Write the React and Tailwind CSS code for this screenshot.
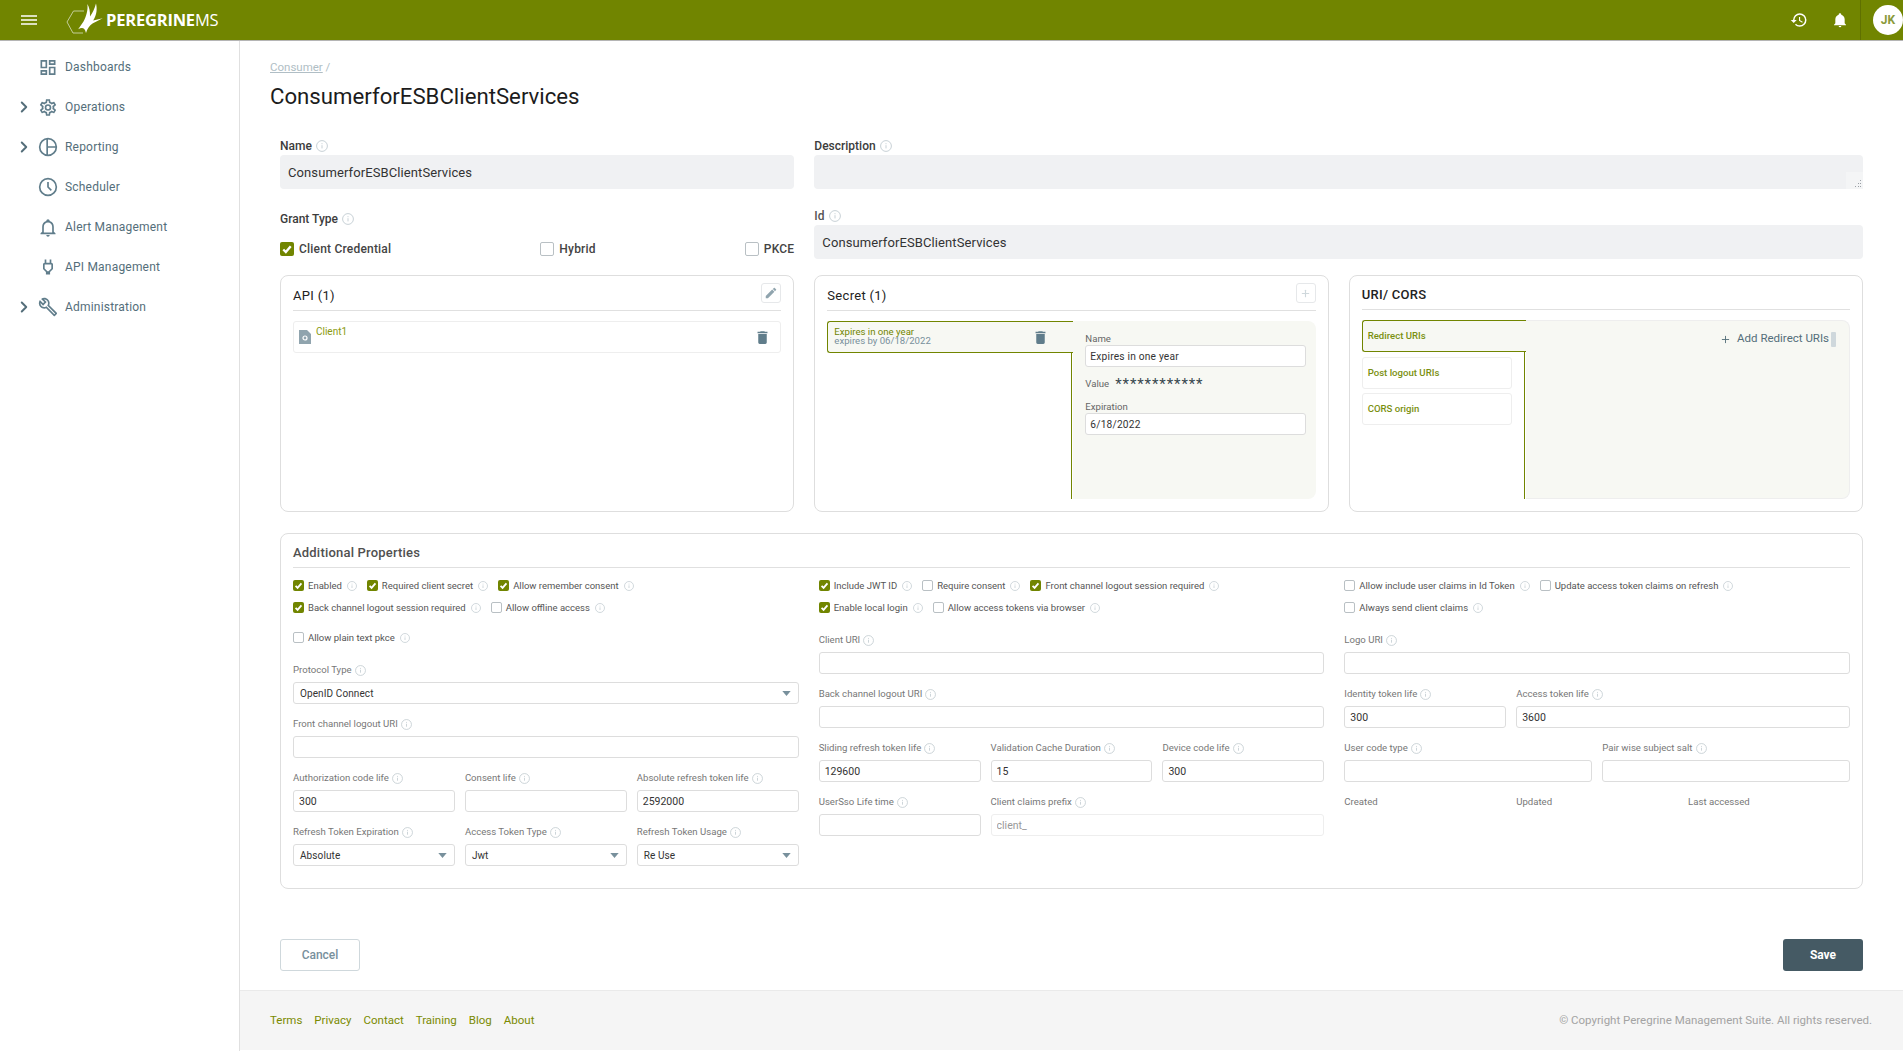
import { ChevronRight, Plus } from 'lucide-react';

const mdi = {
  dashboard: 'M19,5V7H15V5H19M9,5V11H5V5H9M19,13V19H15V13H19M9,17V19H5V17H9M21,3H13V9H21V3M11,3H3V13H11V3M21,11H13V21H21V11M11,15H3V21H11V15Z',
  cog: 'M12,8A4,4 0 0,1 16,12A4,4 0 0,1 12,16A4,4 0 0,1 8,12A4,4 0 0,1 12,8M12,10A2,2 0 0,0 10,12A2,2 0 0,0 12,14A2,2 0 0,0 14,12A2,2 0 0,0 12,10M10,22C9.75,22 9.54,21.82 9.5,21.58L9.13,18.93C8.5,18.68 7.96,18.34 7.44,17.94L4.95,18.95C4.73,19.03 4.46,18.95 4.34,18.73L2.34,15.27C2.21,15.05 2.27,14.78 2.46,14.63L4.57,12.97L4.5,12L4.57,11L2.46,9.37C2.27,9.22 2.21,8.95 2.34,8.73L4.34,5.27C4.46,5.05 4.73,4.96 4.95,5.05L7.44,6.05C7.96,5.66 8.5,5.32 9.13,5.07L9.5,2.42C9.54,2.18 9.75,2 10,2H14C14.25,2 14.46,2.18 14.5,2.42L14.87,5.07C15.5,5.32 16.04,5.66 16.56,6.05L19.05,5.05C19.27,4.96 19.54,5.05 19.66,5.27L21.66,8.73C21.79,8.95 21.73,9.22 21.54,9.37L19.43,11L19.5,12L19.43,13L21.54,14.63C21.73,14.78 21.79,15.05 21.66,15.27L19.66,18.73C19.54,18.95 19.27,19.04 19.05,18.95L16.56,17.95C16.04,18.34 15.5,18.68 14.87,18.93L14.5,21.58C14.46,21.82 14.25,22 14,22H10M11.25,4L10.88,6.61C9.68,6.86 8.62,7.5 7.85,8.39L5.44,7.35L4.69,8.65L6.8,10.2C6.4,11.37 6.4,12.64 6.8,13.8L4.68,15.36L5.43,16.66L7.86,15.62C8.63,16.5 9.68,17.14 10.87,17.38L11.24,20H12.76L13.13,17.39C14.32,17.14 15.37,16.5 16.14,15.62L18.57,16.66L19.32,15.36L17.2,13.81C17.6,12.64 17.6,11.37 17.2,10.2L19.31,8.65L18.56,7.35L16.15,8.39C15.38,7.5 14.32,6.86 13.12,6.62L12.75,4H11.25Z',
  bellOutline: 'M10 21H14C14 22.1 13.1 23 12 23S10 22.1 10 21M21 19V20H3V19L5 17V11C5 7.9 7 5.2 10 4.3V4C10 2.9 10.9 2 12 2S14 2.9 14 4V4.3C17 5.2 19 7.9 19 11V17L21 19M17 11C17 8.2 14.8 6 12 6S7 8.2 7 11V18H17V11Z',
  plug: 'M16 7V3H14V7H10V3H8V7C7 7 6 8 6 9V14.5L9.5 18V21H14.5V18L18 14.5V9C18 8 17 7 16 7M16 13.67L12.67 17H11.33L8 13.67V9H16V13.67Z',
  wrench: 'M22.61,19L13.53,9.91C14.46,7.57 14,4.81 12.09,2.91C9.79,0.61 6.21,0.4 3.66,2.26L7.5,6.11L6.08,7.5L2.25,3.69C0.39,6.23 0.6,9.82 2.9,12.11C4.76,13.97 7.47,14.46 9.79,13.59L18.9,22.7C19.29,23.09 19.92,23.09 20.31,22.7L22.61,20.4C23,20 23,19.39 22.61,19M19.61,20.59L10.15,11.13C9.54,11.58 8.86,11.85 8.15,11.95C6.79,12.15 5.36,11.74 4.32,10.7C3.37,9.76 2.93,8.5 3,7.26L6.09,10.35L10.33,6.11L7.24,3C8.5,2.95 9.73,3.39 10.68,4.33C11.76,5.41 12.17,6.9 11.92,8.29C11.8,9 11.5,9.66 11.04,10.25L20.5,19.7L19.61,20.59Z',
  history: 'M13.5,8H12V13L16.28,15.54L17,14.33L13.5,12.25V8M13,3A9,9 0 0,0 4,12H1L4.96,16.03L9,12H6A7,7 0 0,1 13,5A7,7 0 0,1 20,12A7,7 0 0,1 13,19C11.07,19 9.32,18.21 8.06,16.94L6.64,18.36C8.27,20 10.5,21 13,21A9,9 0 0,0 22,12A9,9 0 0,0 13,3',
  bell: 'M21,19V20H3V19L5,17V11C5,7.9 7.03,5.17 10,4.29C10,4.19 10,4.1 10,4A2,2 0 0,1 12,2A2,2 0 0,1 14,4C14,4.1 14,4.19 14,4.29C16.97,5.17 19,7.9 19,11V17L21,19M14,21A2,2 0 0,1 12,23A2,2 0 0,1 10,21',
  trash: 'M19,4H15.5L14.5,3H9.5L8.5,4H5V6H19M6,19A2,2 0 0,0 8,21H16A2,2 0 0,0 18,19V7H6V19Z',
  pencil: 'M20.71,7.04C21.1,6.65 21.1,6 20.71,5.63L18.37,3.29C18,2.9 17.35,2.9 16.96,3.29L15.12,5.12L18.87,8.87M3,17.25V21H6.75L17.81,9.93L14.06,6.18L3,17.25Z',
};

function Mdi({ d, className }) {
  return (
    <svg viewBox="0 0 24 24" className={className} fill="currentColor" fillRule="evenodd">
      <path d={d} />
    </svg>
  );
}

function PieIcon({ className }) {
  return (
    <svg viewBox="0 0 24 24" className={className} fill="none" stroke="currentColor" strokeWidth="2">
      <circle cx="12" cy="12" r="10" />
      <path d="M11 2v20M11 12h11" />
    </svg>
  );
}

function ClockIcon({ className }) {
  return (
    <svg viewBox="0 0 24 24" className={className} fill="none" stroke="currentColor" strokeWidth="2">
      <circle cx="12" cy="12" r="10" />
      <path d="M12 6v6l4 4" />
    </svg>
  );
}

function Info({ className = 'w-[11px] h-[11px]' }) {
  return (
    <svg viewBox="0 0 12 12" className={`shrink-0 text-[#c2ccd1] ${className}`} fill="none" stroke="currentColor" strokeWidth="0.9">
      <circle cx="6" cy="6" r="5.4" />
      <path d="M6 5.2v3.2M6 3.2v1" />
    </svg>
  );
}

function Logo() {
  return (
    <svg viewBox="60 0 48 40" className="w-[48px] h-10 ml-[-1px]">
      <path d="M84 11H73.5L67 22l6 11h10" fill="none" stroke="#c3cd99" strokeWidth="1" />
      <path
        d="M87.3 4C88.3 10 86 17 83.5 21.5L78.2 29.3C81.5 27.5 84.5 26.8 86 33C87.2 28.6 89.5 25.4 92.5 23.4L102.7 18.3L93.2 20.4C97 14.5 97.2 8.5 96 3.4C94.6 8.8 92.5 13 90 16.4C90.2 11.4 89.3 7.2 87.3 4Z"
        fill="#fff"
      />
    </svg>
  );
}

function Check({ on, size = 'sm' }) {
  const box = size === 'lg' ? 'w-[14px] h-[14px]' : 'w-[11px] h-[11px]';
  return (
    <span className={`${box} shrink-0 rounded-[2px] flex items-center justify-center ${on ? 'bg-[#718500]' : 'bg-white border border-[#b9c0c4]'}`}>
      {on && (
        <svg viewBox="0 0 12 12" className="w-full h-full" fill="none" stroke="#fff" strokeWidth="2">
          <path d="M2.8 6.4l2.2 2.2 4.2-5" />
        </svg>
      )}
    </span>
  );
}

function CheckRow({ items, className = '' }) {
  return (
    <div className={`flex items-center h-[23px] gap-[10px] ${className}`}>
      {items.map(([label, on]) => (
        <div key={label} className="flex items-center">
          <Check on={on} />
          <span className="ml-[4px] text-[9.5px] leading-3 text-[#555] whitespace-nowrap">{label}</span>
          <Info className="w-[10px] h-[10px] ml-[5px] mt-[1px]" />
        </div>
      ))}
    </div>
  );
}

function Label({ text, info = true }) {
  return (
    <div className="flex items-center h-3 mb-[6px] gap-[3px] text-[9.6px] text-[#777] whitespace-nowrap">
      {text}
      {info && <Info />}
    </div>
  );
}

function Field({ label, value = '', className = '', disabled = false }) {
  return (
    <div className={`mb-[14px] min-w-0 ${className}`}>
      <Label text={label} />
      <input
        readOnly
        value={value}
        className={`block w-full h-[22px] px-[5px] rounded-[3px] border bg-white text-[10.5px] outline-none ${disabled ? 'border-[#eeeeee] text-[#999]' : 'border-[#dddddd] text-[#333]'}`}
      />
    </div>
  );
}

function SelectField({ label, value, className = '' }) {
  return (
    <div className={`mb-[14px] min-w-0 ${className}`}>
      <Label text={label} />
      <div className="flex items-center justify-between h-[22px] pl-[6px] pr-[7px] rounded-[3px] border border-[#dddddd] bg-white text-[10px] tracking-[0.1px] text-[#333]">
        {value}
        <svg viewBox="0 0 10 6" className="w-[9px] h-[5px] text-[#78909c]" fill="currentColor">
          <path d="M0 0h10L5 6z" />
        </svg>
      </div>
    </div>
  );
}

function IconBtn({ children }) {
  return (
    <button className="w-5 h-5 flex items-center justify-center rounded-[3px] border border-[#e6e8ea] bg-white text-[#90a4ae]">
      {children}
    </button>
  );
}

function Card({ title, action, children, compact = false }) {
  return (
    <div className="h-[237px] px-3 border border-[#dedede] rounded-lg bg-white">
      <div className={`flex justify-between items-start pt-[7px] border-b border-[#e0e0e0] ${compact ? 'h-[34px]' : 'h-[35px]'}`}>
        <h3 className={`text-[13px] leading-5 tracking-[0.3px] text-[#222] ${compact ? 'mt-[2px] font-medium' : 'mt-[3px] font-normal'}`}>{title}</h3>
        {action}
      </div>
      {children}
    </div>
  );
}

function SmallInput({ label, value }) {
  return (
    <div>
      <div className="text-[9.6px] leading-3 text-[#666]">{label}</div>
      <input readOnly value={value} className="block w-full h-[22px] px-[4px] rounded-[3px] border border-[#dddddd] bg-white text-[10.2px] tracking-[0.2px] text-[#333] outline-none" />
    </div>
  );
}

const nav = [
  { label: 'Dashboards', icon: <Mdi d={mdi.dashboard} className="w-[21px] h-[21px]" /> },
  { label: 'Operations', icon: <Mdi d={mdi.cog} className="w-[21px] h-[21px]" />, more: true },
  { label: 'Reporting', icon: <PieIcon className="w-5 h-5" />, more: true },
  { label: 'Scheduler', icon: <ClockIcon className="w-5 h-5" /> },
  { label: 'Alert Management', icon: <Mdi d={mdi.bellOutline} className="w-[21px] h-[21px]" /> },
  { label: 'API Management', icon: <Mdi d={mdi.plug} className="w-6 h-6" /> },
  { label: 'Administration', icon: <Mdi d={mdi.wrench} className="w-[22px] h-[22px]" />, more: true },
];

const footerLinks = ['Terms', 'Privacy', 'Contact', 'Training', 'Blog', 'About'];

function Sidebar() {
  return (
    <aside className="w-[240px] shrink-0 border-r border-[#e0e0e0] bg-white pt-[6px]">
      {nav.map((item) => (
        <div key={item.label} className="relative flex items-center h-10 pl-[38px] text-[12px] tracking-[0.2px] text-[#546e7a]">
          {item.more && <ChevronRight className="absolute left-[15px] w-[18px] h-[18px] mt-[-1px]" strokeWidth={2.6} />}
          <span className="w-5 flex justify-center text-[#607d8b]">{item.icon}</span>
          <span className="ml-[7px]">{item.label}</span>
        </div>
      ))}
    </aside>
  );
}

export default function App() {
  return (
    <div className="h-screen flex flex-col overflow-hidden bg-white font-[Roboto,sans-serif]">
      <header className="flex items-center h-[41px] shrink-0 bg-[#718500] border-b border-[#b5b5b5] text-white">
        <svg viewBox="0 0 16 12" className="ml-[21px] w-4 h-3 mr-[24px]" stroke="#fff" strokeWidth="1.6">
          <path d="M0 2h16M0 6h16M0 10h16" />
        </svg>
        <Logo />
        <span className="ml-[-2px] font-['Open_Sans',sans-serif] text-[16.5px] leading-none tracking-[-0.2px] font-bold">
          PEREGRINE<span className="font-normal">MS</span>
        </span>
        <div className="ml-auto flex items-center h-full">
          <Mdi d={mdi.history} className="w-[18px] h-[18px] mr-[24px]" />
          <Mdi d={mdi.bell} className="w-[16px] h-[16px] mr-[12px]" />
          <div className="h-full border-l border-[#5f7000] pl-[12px] flex items-center">
            <div className="w-[30px] h-[30px] rounded-full bg-white flex items-center justify-center text-[12px] font-bold text-[#8a9a3a]">
              JK
            </div>
          </div>
        </div>
      </header>

      <div className="flex flex-1 min-h-0">
        <Sidebar />

        <main className="flex-1 flex flex-col min-w-0">
          <div className="flex-1 px-[30px] pt-[19px]">
            <div className="text-[11.5px] leading-[14px] text-[#b0bec5]">
              <span className="underline">Consumer</span> /
            </div>
            <h1 className="mt-[6px] text-[22.2px] leading-8 font-normal text-[#1c1c1c]">ConsumerforESBClientServices</h1>

            <div className="px-[10px]">
              <div className="grid grid-cols-3 gap-x-5 mt-[27px]">
                <div>
                  <div className="flex items-center h-[13px] gap-[4px] text-[12px] font-medium text-[#3c3c3c]">
                    Name <Info className="w-[12px] h-[12px]" />
                  </div>
                  <input readOnly value="ConsumerforESBClientServices" className="block w-full h-[34px] mt-[3px] px-[8px] rounded bg-[#f0f1f3] text-[13px] tracking-[0.1px] text-[#333] outline-none" />
                  <div className="flex items-center h-[13px] mt-[23px] gap-[4px] text-[12px] font-medium text-[#3c3c3c]">
                    Grant Type <Info className="w-[12px] h-[12px]" />
                  </div>
                  <div className="flex justify-between mt-[15px] text-[12px] font-medium tracking-[0.2px] text-[#444]">
                    {[['Client Credential', true], ['Hybrid', false], ['PKCE', false]].map(([label, on]) => (
                      <div key={label} className="flex items-center gap-[5px]">
                        <Check on={on} size="lg" />
                        {label}
                      </div>
                    ))}
                  </div>
                </div>
                <div className="col-span-2">
                  <div className="flex items-center h-[13px] gap-[4px] text-[12px] font-medium text-[#3c3c3c]">
                    Description <Info className="w-[12px] h-[12px]" />
                  </div>
                  <div className="relative mt-[3px]">
                    <textarea readOnly className="block w-full h-[34px] rounded bg-[#f0f1f3] outline-none resize-none" />
                    <span className="absolute right-0 bottom-0 w-[17px] h-[17px] bg-[#f4f5f6] flex items-end justify-end p-[1px]">
                      <svg viewBox="0 0 8 8" className="w-2 h-2 text-[#9aa0a6]" fill="currentColor">
                        <path d="M6 0h1v1H6zM4 3h1v1H4zM6 3h1v1H6zM1 6h1v1H1zM4 6h1v1H4zM6 6h1v1H6z" />
                      </svg>
                    </span>
                  </div>
                  <div className="flex items-center h-[13px] mt-5 gap-[4px] text-[12px] font-medium text-[#555]">
                    Id <Info className="w-[12px] h-[12px]" />
                  </div>
                  <input readOnly value="ConsumerforESBClientServices" className="block w-full h-[34px] mt-[3px] px-[8px] rounded bg-[#f0f1f3] text-[13px] tracking-[0.1px] text-[#333] outline-none" />
                </div>
              </div>

              <div className="grid grid-cols-3 gap-x-5 mt-4">
                <Card title="API (1)" action={<IconBtn><Mdi d={mdi.pencil} className="w-[14px] h-[14px]" /></IconBtn>}>
                  <div className="flex items-center h-8 mt-[10px] pl-[5px] pr-[9px] border border-[#eeeeee] rounded-[3px]">
                    <svg viewBox="0 0 12 14" className="w-3 h-[14px] shrink-0">
                      <path d="M0 0h8l4 4v10H0z" fill="#90a4ae" />
                      <circle cx="6" cy="8" r="2" fill="none" stroke="#fff" strokeWidth="1.2" />
                    </svg>
                    <span className="ml-[5px] mb-[10px] text-[10px] leading-3 text-[#8a9a10]">Client1</span>
                    <Mdi d={mdi.trash} className="ml-auto w-[17px] h-[17px] text-[#607d8b]" />
                  </div>
                </Card>

                <Card title="Secret (1)" action={<IconBtn><Plus className="w-[11px] h-[11px] text-[#cfd8dc]" strokeWidth={2.5} /></IconBtn>}>
                  <div className="flex h-[178px] mt-[10px]">
                    <div className="w-[246px] shrink-0 flex flex-col">
                      <div className="flex items-center h-8 pl-[6px] pr-[24px] bg-[#f7f8f3] border border-r-0 border-[#718500] rounded-l-[3px]">
                        <div className="text-[9.6px] leading-[9px] mb-[2px]">
                          <div className="text-[#718500]">Expires in one year</div>
                          <div className="text-[#78909c]">expires by 06/18/2022</div>
                        </div>
                        <Mdi d={mdi.trash} className="ml-auto w-[17px] h-[17px] text-[#607d8b]" />
                      </div>
                      <div className="flex-1 mr-[1px] border-r border-[#718500]" />
                    </div>
                    <div className="flex-1 bg-[#f7f8f3] rounded-r-lg pt-[12px] pl-[12px] pr-[10px]">
                      <SmallInput label="Name" value="Expires in one year" />
                      <div className="flex items-center h-4 mt-[9px] text-[9.6px] text-[#666]">
                        Value
                        <span className="ml-[6px] text-[15px] leading-4 tracking-[0.9px] text-[#37474f]">************</span>
                      </div>
                      <div className="mt-[9px]">
                        <SmallInput label="Expiration" value="6/18/2022" />
                      </div>
                    </div>
                  </div>
                </Card>

                <Card compact title="URI/ CORS">
                  <div className="flex h-[179px] mt-[10px]">
                    <div className="w-[164px] shrink-0 flex flex-col">
                      <div className="flex items-center h-8 pl-[5px] pt-[1px] bg-[#f7f8f3] border border-r-0 border-[#718500] rounded-l-[3px] text-[9.6px] font-medium text-[#7a9010]">
                        Redirect URIs
                      </div>
                      <div className="flex-1 mr-[1px] border-r border-[#718500] pt-[5px]">
                        <div className="flex items-center w-[150px] h-8 pl-[5px] mb-[4px] border border-[#eeeeee] rounded-[3px] text-[9.6px] font-medium text-[#7a9010]">
                          Post logout URIs
                        </div>
                        <div className="flex items-center w-[150px] h-8 pl-[5px] border border-[#eeeeee] rounded-[3px] text-[9.6px] font-medium text-[#7a9010]">
                          CORS origin
                        </div>
                      </div>
                    </div>
                    <div className="flex-1 flex justify-end items-start bg-[#f7f8f3] border border-l-0 border-[#eeeeee] rounded-r-lg pt-[10px] pr-[13px]">
                      <div className="flex items-center h-[16px] text-[11.5px] text-[#546e7a]">
                        <Plus className="w-[11px] h-[11px] mr-[6px]" strokeWidth={2} />
                        Add Redirect URIs
                        <span className="w-[5px] h-[15px] ml-[2px] rounded-[1px] bg-[#cfd8dc]" />
                      </div>
                    </div>
                  </div>
                </Card>
              </div>

              <div className="h-[356px] mt-[21px] px-3 border border-[#dedede] rounded-lg bg-white">
                <div className="flex items-center h-[34px] pt-[4px] border-b border-[#e0e0e0] text-[13px] font-medium tracking-[0.2px] text-[#505050]">
                  Additional Properties
                </div>
                <div className="grid grid-cols-3 gap-x-5 mt-[6px]">
                  <div>
                    <CheckRow className="mb-[-1px]" items={[['Enabled', true], ['Required client secret', true], ['Allow remember consent', true]]} />
                    <CheckRow items={[['Back channel logout session required', true], ['Allow offline access', false]]} />
                    <CheckRow className="mt-[7px] mb-[15px]" items={[['Allow plain text pkce', false]]} />
                    <SelectField label="Protocol Type" value="OpenID Connect" />
                    <Field label="Front channel logout URI" />
                    <div className="grid grid-cols-3 gap-x-[10px]">
                      <Field label="Authorization code life" value="300" />
                      <Field label="Consent life" />
                      <Field label="Absolute refresh token life" value="2592000" />
                      <SelectField label="Refresh Token Expiration" value="Absolute" />
                      <SelectField label="Access Token Type" value="Jwt" />
                      <SelectField label="Refresh Token Usage" value="Re Use" />
                    </div>
                  </div>

                  <div>
                    <CheckRow className="mb-[-1px]" items={[['Include JWT ID', true], ['Require consent', false], ['Front channel logout session required', true]]} />
                    <CheckRow className="mb-[15px]" items={[['Enable local login', true], ['Allow access tokens via browser', false]]} />
                    <Field label="Client URI" />
                    <Field label="Back channel logout URI" />
                    <div className="grid grid-cols-3 gap-x-[10px]">
                      <Field label="Sliding refresh token life" value="129600" />
                      <Field label="Validation Cache Duration" value="15" />
                      <Field label="Device code life" value="300" />
                      <Field label="UserSso Life time" />
                      <Field label="Client claims prefix" value="client_" disabled className="col-span-2" />
                    </div>
                  </div>

                  <div>
                    <CheckRow className="mb-[-1px]" items={[['Allow include user claims in Id Token', false], ['Update access token claims on refresh', false]]} />
                    <CheckRow className="mb-[15px]" items={[['Always send client claims', false]]} />
                    <Field label="Logo URI" />
                    <div className="grid grid-cols-3 gap-x-[10px]">
                      <Field label="Identity token life" value="300" />
                      <Field label="Access token life" value="3600" className="col-span-2" />
                    </div>
                    <div className="grid grid-cols-2 gap-x-[10px]">
                      <Field label="User code type" />
                      <Field label="Pair wise subject salt" />
                    </div>
                    <div className="grid grid-cols-3 gap-x-[10px]">
                      {['Created', 'Updated', 'Last accessed'].map((t) => (
                        <Label key={t} text={t} info={false} />
                      ))}
                    </div>
                  </div>
                </div>
              </div>

              <div className="flex justify-between mt-[50px]">
                <button className="w-[80px] h-8 rounded-[3px] border border-[#cfd8dc] bg-white text-[12px] font-medium text-[#78909c]">Cancel</button>
                <button className="w-[80px] h-8 rounded-[3px] bg-[#455a64] text-[12px] font-bold text-white">Save</button>
              </div>
            </div>
          </div>

          <footer className="flex items-center justify-between h-[60px] mb-[1px] shrink-0 pl-[30px] pr-[31px] bg-[#f5f5f5] border-t border-[#eaeaea]">
            <div className="flex gap-3 text-[11.5px] text-[#7a8a00]">
              {footerLinks.map((l) => (
                <span key={l}>{l}</span>
              ))}
            </div>
            <span className="text-[11.5px] text-[#a3a3a3]">© Copyright Peregrine Management Suite. All rights reserved.</span>
          </footer>
        </main>
      </div>
    </div>
  );
}
